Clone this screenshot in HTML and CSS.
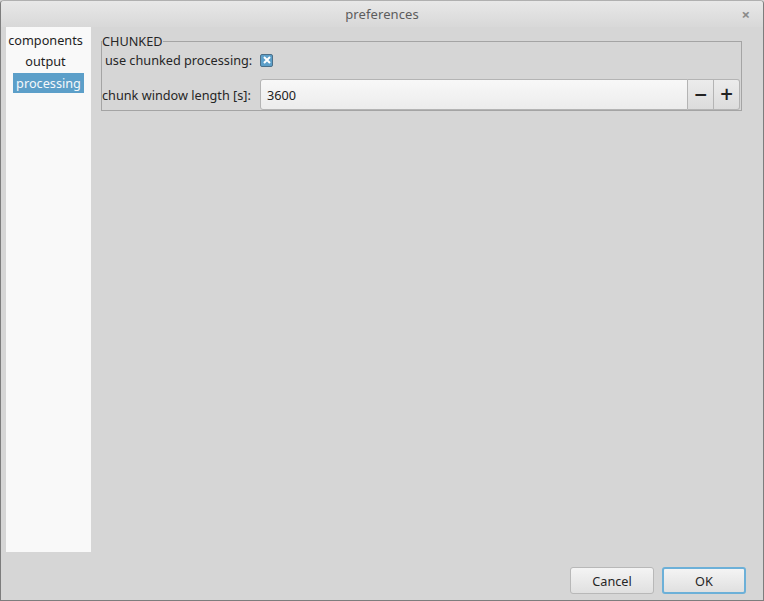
FILE: index.html
```html
<!DOCTYPE html>
<html>
<head>
<meta charset="utf-8">
<link rel="stylesheet" href="styles.css">
</head>
<body>
<div class="window">
  <div class="titlebar">
    <span class="title">preferences</span>
    <span class="close">×</span>
  </div>
  <div class="content">
    <div class="main">
      <ul class="sidebar">
        <li class="item">components</li>
        <li class="item">output</li>
        <li class="item selected">processing</li>
      </ul>
      <div class="pane">
        <fieldset class="group">
          <legend class="legend">CHUNKED</legend>
          <div class="row row-check">
            <span class="label">use chunked processing:</span>
            <span class="checkbox"><svg width="8" height="8" viewBox="0 0 8 8"><path d="M1 1L7 7M7 1L1 7" stroke="#fff" stroke-width="2"/></svg></span>
          </div>
          <div class="row row-spin">
            <span class="label label2">chunk window length [s]:</span>
            <div class="spin">
              <input class="spin-input" type="text" value="3600">
              <button class="spin-btn">−</button>
              <button class="spin-btn">+</button>
            </div>
          </div>
        </fieldset>
      </div>
    </div>
    <div class="footer">
      <button class="btn">Cancel</button>
      <button class="btn btn-default">OK</button>
    </div>
  </div>
</div>
</body>
</html>
```
FILE: styles.css
```css
* { box-sizing: border-box; }
html, body { margin: 0; padding: 0; }
body {
  width: 764px;
  height: 601px;
  font-family: "Noto Sans", "DejaVu Sans", sans-serif;
  font-size: 12.7px;
  color: #262626;
  background: #d6d6d6;
}
.window {
  width: 764px;
  height: 601px;
  border: 1px solid #7d7d7d;
  border-top-color: #b0b0b0;
  border-radius: 4px 4px 0 0;
  display: flex;
  flex-direction: column;
  background: #d6d6d6;
  overflow: hidden;
}
.titlebar {
  height: 26px;
  flex: none;
  display: flex;
  align-items: center;
  justify-content: center;
  position: relative;
  background: linear-gradient(#e8e8e8, #d8d8d8);
}
.title {
  color: #5c5c5c;
  font-size: 13px;
  letter-spacing: 0.1px;
}
.close {
  position: absolute;
  right: 13px;
  top: 3px;
  color: #8a8a8a;
  font-size: 15px;
  font-weight: bold;
}
.content {
  flex: 1;
  display: flex;
  flex-direction: column;
  padding: 0 0 0 5px;
}
.main {
  flex: 1;
  display: flex;
}
.sidebar {
  list-style: none;
  margin: 0;
  padding: 3px 6px 0 0;
  width: 85px;
  height: 525px;
  background: #f9f9f9;
  display: flex;
  flex-direction: column;
  align-items: center;
}
.item {
  height: 21px;
  line-height: 21px;
  padding: 0 3px;
  color: #1e1e1e;
}
.item.selected {
  background: #5c9fc9;
  color: #f4f8fb;
  height: 20px;
  line-height: 20px;
  margin-top: 1px;
  margin-left: 6px;
  width: 71px;
  text-align: center;
}
.pane {
  flex: 1;
  padding: 7px 21px 0 10px;
}
.group {
  margin: 0;
  border: 1px solid #a4a4a4;
  padding: 0;
  height: 77px;
  position: relative;
}
.legend {
  padding: 0;
  margin-left: 0;
  color: #262626;
  line-height: 14px;
}
.row {
  display: flex;
  align-items: center;
}
.row-check {
  height: 24px;
  padding-left: 3px;
}
.checkbox {
  width: 13px;
  height: 13px;
  margin-left: 8px;
  background: #5c9fc9;
  border: 1px solid #4c6f88;
  border-radius: 2px;
  display: flex;
  align-items: center;
  justify-content: center;
}
.checkbox svg { display: block; }
.row-spin {
  height: 31px;
  margin-top: 7px;
}
.label2 { margin-right: 9px; }
.spin {
  flex: 1;
  display: flex;
  height: 31px;
  margin-right: 1px;
}
.spin-input {
  flex: 1;
  min-width: 0;
  height: 31px;
  border: 1px solid #b4b4b4;
  border-radius: 3px 0 0 3px;
  background: linear-gradient(#f8f8f8, #ececec);
  font-family: inherit;
  font-size: 12.7px;
  color: #222;
  padding: 0 6px;
  outline: none;
}
.spin-btn {
  width: 26px;
  height: 31px;
  border: 1px solid #b4b4b4;
  border-left: none;
  background: linear-gradient(#ececec, #dcdcdc);
  font-family: "DejaVu Sans", sans-serif;
  font-size: 17px;
  font-weight: bold;
  color: #222;
  padding: 0;
  line-height: 1;
}
.spin-btn:last-child { border-radius: 0 3px 3px 0; }
.footer {
  height: 48px;
  flex: none;
  display: flex;
  justify-content: flex-end;
  align-items: flex-start;
  padding: 15px 17px 0 0;
  gap: 8px;
}
.btn {
  width: 84px;
  height: 27px;
  border: 1px solid #b8b8b8;
  border-radius: 3px;
  background: linear-gradient(#f4f4f4, #e0e0e0);
  font-family: inherit;
  font-size: 12.7px;
  color: #262626;
  padding: 0;
}
.btn-default {
  border: 2px solid #6cb0d8;
}
```
